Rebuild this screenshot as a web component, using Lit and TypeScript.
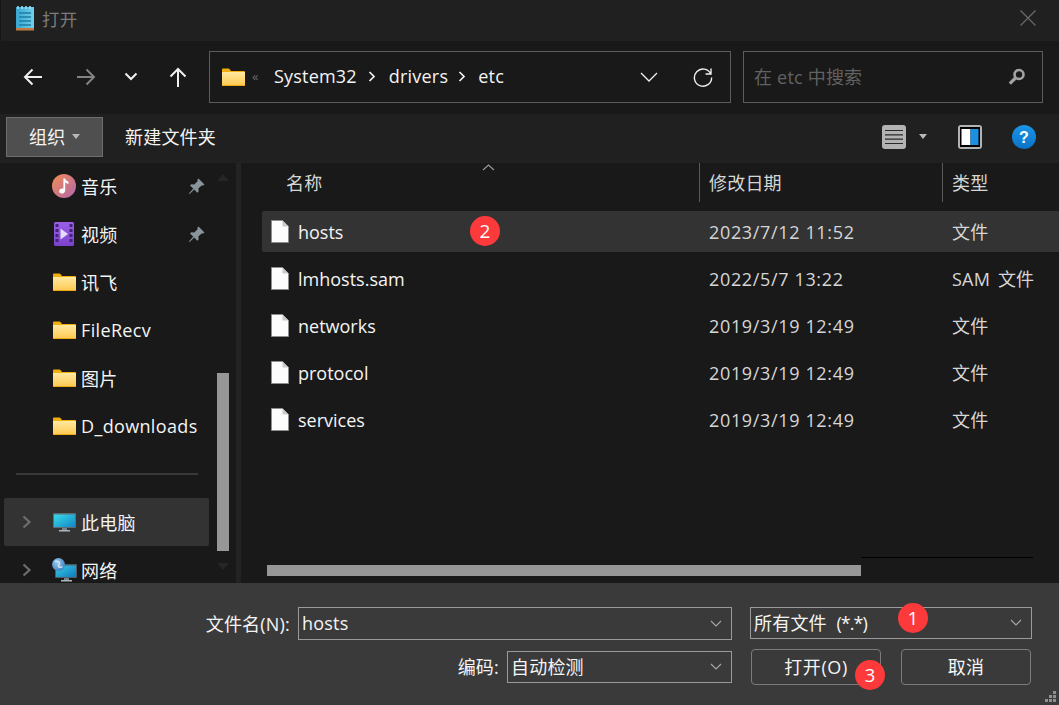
import { LitElement, html, css, svg } from "lit";
import { customElement } from "lit/decorators.js";

const folder = (id: string) => html`<svg class="ic-folder" width="23" height="18" viewBox="0 0 23 18">
  <defs><linearGradient id=${id} x1="0" y1="0" x2="0" y2="1"><stop offset="0" stop-color="#ffe9a0"/><stop offset="1" stop-color="#ffc84f"/></linearGradient></defs>
  <path d="M0 1.5A1 1 0 0 1 1 .5h6l2 2.5h13a1 1 0 0 1 1 1v1H0z" fill="#f3ad0c"/>
  <path d="M0 4h23v13a1 1 0 0 1-1 1H1a1 1 0 0 1-1-1z" fill="url(#${id})"/>
  <path d="M0 17h23v.2a.8.8 0 0 1-.8.8H.8a.8.8 0 0 1-.8-.8z" fill="#eba914"/>
</svg>`;

const pin = html`<svg width="17" height="17" viewBox="0 0 17 17"><path d="M10.5.5 16.5 6.5 15 7.6 13.6 7.4 10.4 10.6 10.6 13.4 9.2 14.8 6.3 11.4 1.6 16 .9 15.4 5.3 10.4 2 7.6 3.4 6.2 6.2 6.4 9.6 3.2 9.4 1.8z" fill="#8a949b"/></svg>`;

const music = html`<svg width="24" height="24" viewBox="0 0 24 24">
  <defs><linearGradient id="mu" x1="0" y1="0" x2="1" y2="1"><stop offset="0" stop-color="#f18c52"/><stop offset="1" stop-color="#b268ac"/></linearGradient></defs>
  <circle cx="12" cy="12" r="12" fill="url(#mu)"/>
  <path d="M11.4 4.5h1.8c.3 2 1.8 2.4 3.3 3.2v2.2c-1.4-.4-2.4-.9-3.3-1.7v8c0 2-1.6 3.4-3.4 3.4-1.5 0-2.6-1-2.6-2.3 0-1.6 1.5-2.7 3.1-2.7.4 0 .8 0 1.1.2z" fill="#fff"/>
</svg>`;

const video = html`<svg width="20" height="24" viewBox="0 0 20 24">
  <defs><linearGradient id="vi" x1="0" y1="0" x2="0" y2="1"><stop offset="0" stop-color="#9a5fe6"/><stop offset="1" stop-color="#7c42cc"/></linearGradient></defs>
  <rect width="20" height="24" rx="1.5" fill="url(#vi)"/>
  ${[2, 7, 12, 17].map((y) => svg`<rect x="1.5" y=${y} width="3" height="3" fill="#3f2477"/><rect x="15.5" y=${y} width="3" height="3" fill="#3f2477"/>`)}
  <path d="M6.5 6.5 14 12l-7.500 5.500z" fill="#e4dcfa"/>
</svg>`;

const pc = html`<svg width="23" height="19" viewBox="0 0 23 19">
  <defs><linearGradient id="pc" x1="0" y1="0" x2="1" y2="1"><stop offset="0" stop-color="#38dcea"/><stop offset="1" stop-color="#1585c4"/></linearGradient></defs>
  <rect x="0" y="0" width="23" height="15" rx="1" fill="#5d6b74"/>
  <rect x="1" y="1.500" width="21" height="12.500" fill="url(#pc)"/>
  <rect x="9" y="15" width="5" height="2" fill="#74828a"/><rect x="6" y="17" width="11" height="1.500" fill="#aeb6bb"/>
</svg>`;

const net = html`<svg width="25" height="24" viewBox="0 0 25 24">
  <defs>
    <linearGradient id="ne" x1="0" y1="0" x2="1" y2="1"><stop offset="0" stop-color="#38cde6"/><stop offset="1" stop-color="#1078bd"/></linearGradient>
    <radialGradient id="gl" cx=".4" cy=".35" r=".8"><stop offset="0" stop-color="#9ccdf0"/><stop offset="1" stop-color="#2b74b5"/></radialGradient>
  </defs>
  <rect x="3" y="6" width="22" height="14" rx="1" fill="#4e5c65"/>
  <rect x="4" y="7.500" width="20" height="11.500" fill="url(#ne)"/>
  <rect x="12" y="20" width="5" height="2" fill="#74828a"/><rect x="9" y="22" width="11" height="1.500" fill="#aeb6bb"/>
  <circle cx="6.500" cy="6.500" r="6.500" fill="url(#gl)"/>
  <path d="M3 3.500c2-1 4 0 4.500 1.500s-1.500 2-1 3.500 3 .5 4 .5" fill="none" stroke="#d6e8f6" stroke-width="1.400"/>
</svg>`;

const file = html`<svg width="18" height="23" viewBox="0 0 18 23"><path d="M.5.5h11l6 6v16H.5z" fill="#fcfcfc" stroke="#8d8d8d"/><path d="M11.500.5v6h6z" fill="#c9c9c9"/></svg>`;

const chev = html`<svg width="12" height="8" viewBox="0 0 12 8"><path d="M1 1l5 5 5-5" fill="none" stroke="#a8a8a8" stroke-width="1.100"/></svg>`;
const sideChev = html`<svg width="10" height="14" viewBox="0 0 10 14"><path d="M1.500 1.500 7.500 7l-6 5.500" fill="none" stroke="#6e6e6e" stroke-width="2.200"/></svg>`;
const crumb = html`<svg width="8" height="11" viewBox="0 0 8 11"><path d="M1.500 1 6 5.500 1.500 10" fill="none" stroke="#f2f2f2" stroke-width="1.700"/></svg>`;

@customElement("app-root")
export class AppRoot extends LitElement {
  static styles = css`
    :host { display: block; width: 1059px; height: 705px; overflow: hidden; position: relative;
      font-family: "Open Sans", "Noto Sans CJK SC", sans-serif; font-size: 18px; letter-spacing: .2px; color: #f4f4f4; background: #191919; }
    svg { display: block; flex: none; }
    .title { height: 41px; background: #202020; display: flex; align-items: center; padding: 0 23px 5px 14px; color: #7a7a7a; box-sizing: border-box; border-left: 1px solid #141414; }
    .title .name { margin-left: 7px; font-size: 17.500px; flex: 1; }
    .nav { height: 73px; box-sizing: border-box; background: #191919; display: flex; align-items: center; padding: 0 0 2px 10px; }
    .navbtn { display: flex; justify-content: center; align-items: center; }
    .b1 { width: 46px; } .b2 { width: 60px; } .b3 { width: 30px; } .b4 { width: 63px; }
    .addr { width: 522px; height: 52px; box-sizing: border-box; border: 1px solid #5c5c5c; display: flex; align-items: center; padding-left: 12px; }
    .laquo { color: #6a6a6a; font-size: 13px; margin: 0 13px 0 7px; width: 9px; line-height: 1; }
    .cr { margin: 0 13px 0 11px; }
    .cr.second { margin: 0 12px 0 10px; }
    .sp { flex: 1; }
    .txt { display: block; margin-top: -2px; }
    .refresh { margin: 0 17px 0 35px; }
    .search { width: 300px; height: 52px; margin-left: 12px; box-sizing: border-box; border: 1px solid #5c5c5c; display: flex; align-items: center; padding: 0 17px 0 10px; color: #626262; justify-content: space-between; }
    .tools { height: 47px; box-sizing: border-box; background: #202020; display: flex; align-items: center; padding: 0 23px 2px 6px; }
    .org { width: 97px; height: 40px; box-sizing: border-box; background: #4f4f4f; border: 1px solid #6e6e6e; display: flex; align-items: center; padding-left: 22px; gap: 7px; }
    .caret { width: 0; height: 0; border-left: 4.500px solid transparent; border-right: 4.500px solid transparent; border-top: 5px solid #b8b8b8; }
    .newf { margin-left: 22px; flex: 1; }
    .tr { display: flex; align-items: center; }
    .tcaret { margin: 0 31px 0 13px; }
    .help { margin-left: 30px; }
    .main { height: 422px; display: flex; background: #191919; border-top: 2px solid #212121; box-sizing: border-box; }
    .side { width: 210px; overflow: hidden; padding-left: 4px; box-sizing: border-box; flex: none; margin-top: -1px; }
    .item { height: 48px; width: 205px; display: grid; grid-template-columns: 48px 29px 1fr 17px; align-items: center; box-sizing: border-box; padding-right: 4px; justify-items: start; flex: none; }
    .item .i { display: flex; justify-content: center; width: 24px; }
    .item .c { padding-left: 18px; }
    .item.sel { background: #333; border-radius: 2px; }
    .item .t { white-space: nowrap; margin-top: -1px; }
    .item .long { letter-spacing: .35px; }
    .div { height: 48px; display: flex; align-items: center; padding-left: 12px; }
    .div i { display: block; width: 182px; height: 2px; background: #393939; }
    .sb { width: 26px; display: flex; flex-direction: column; align-items: center; flex: none; }
    .up { margin-top: 11px; width: 0; height: 0; border-left: 6px solid transparent; border-right: 6px solid transparent; border-bottom: 7px solid #262626; }
    .thumb { margin-top: 192px; width: 12px; height: 178px; background: #979797; }
    .dn { margin-top: 12px; width: 0; height: 0; border-left: 6px solid transparent; border-right: 6px solid transparent; border-top: 7px solid #262626; }
    .split { width: 5px; background: #232323; flex: none; }
    .list { flex: 1; display: flex; flex-direction: column; padding-left: 21px; position: relative; min-width: 0; }
    .head { height: 46px; flex: none; display: grid; grid-template-columns: 437px 243px 1fr; color: #d6d6d6; margin-bottom: 2px; }
    .hc { height: 39px; box-sizing: border-box; display: flex; align-items: center; padding: 0 0 1px 9px; border-left: 1px solid #5a5a5a; position: relative; }
    .hc.first { border-left: 0; padding-left: 24px; }
    .sort { position: absolute; left: 220px; top: 1px; }
    .rows { flex: 1; margin-top: -1px; }
    .row { height: 47px; display: grid; grid-template-columns: 437px 243px 1fr; align-items: center; color: #d6d6d6; }
    .row.sel { height: 41px; margin: 1px 0 3px; background: #333; border-radius: 2px 0 0 2px; }
    .nm { display: flex; align-items: center; gap: 9px; padding-left: 9px; color: #f4f4f4; letter-spacing: 0; }
    .dt, .ty { padding-left: 10px; }
    .dt { letter-spacing: .65px; }
    .ty { margin-top: -2px; word-spacing: 3px; }
    .hs { flex: none; height: 26px; margin-left: 5px; display: flex; align-items: flex-start; }
    .hs .bar { width: 594px; height: 11px; background: #979797; margin-top: 8px; }
    .hs .ln { width: 172px; height: 1px; background: #000; }
    .bottom { height: 122px; background: #3a3a3a; padding: 24px 27px 0 0; box-sizing: border-box; display: flex; flex-direction: column; gap: 9px; position: relative; }
    .r { display: flex; align-items: center; justify-content: flex-end; }
    .lbl { margin: -2px 8px 0 0; }
    .fld { box-sizing: border-box; border: 1px solid #9a9a9a; display: flex; align-items: center; justify-content: space-between; padding: 0 9px 0 3px; }
    .f1 { width: 434px; height: 33px; }
    .f2 { width: 282px; height: 32px; margin-left: 18px; align-self: flex-start; }
    .f3 { width: 225px; height: 32px; }
    .pat { letter-spacing: -1px; }
    .btn { box-sizing: border-box; width: 130px; height: 36px; padding-bottom: 2px; border: 1px solid #7c7c7c; border-radius: 4px; display: flex; align-items: center; justify-content: center; }
    .btn.o { margin-left: 19px; letter-spacing: .6px; }
    .btn.x { margin-left: 20px; margin-right: 1px; }
    .badge { position: absolute; width: 30px; height: 30px; border-radius: 50%; background: #fd3a3b; color: #fff; display: flex; align-items: center; justify-content: center; font-size: 19px; }
    .b-1 { left: 898px; top: 603px; } .b-2 { left: 470px; top: 216px; } .b-3 { left: 855px; top: 660px; }
    .grip { position: absolute; right: 2px; bottom: 2px; }
  `;

  render() {
    const rows = [
      ["lmhosts.sam", "2022/5/7 13:22", "SAM 文件"],
      ["networks", "2019/3/19 12:49", "文件"],
      ["protocol", "2019/3/19 12:49", "文件"],
      ["services", "2019/3/19 12:49", "文件"],
    ];
    const sideItems = [
      [music, "音乐", true], [video, "视频", true], [folder("f1"), "讯飞", false],
      [folder("f2"), "FileRecv", false], [folder("f3"), "图片", false], [folder("f4"), "D_downloads", false],
    ] as const;
    return html`
      <div class="title">
        <svg width="20" height="25" viewBox="0 0 20 25">
          <defs><linearGradient id="np" x1="0" y1="0" x2="1" y2="0"><stop offset="0" stop-color="#3aa6cf"/><stop offset="1" stop-color="#6fd0ee"/></linearGradient></defs>
          <rect x="1" y="1" width="18" height="23" fill="url(#np)"/>
          <rect x="1" y="22" width="18" height="2.500" fill="#c27a3e"/>
          <path d="M4 7h12M4 11h12M4 15h12M4 19h12" stroke="#1f7ea3" stroke-width="1.500"/>
          <path d="M3 0v3M7 0v3M11 0v3M15 0v3" stroke="#9fe0f5" stroke-width="1.500"/>
        </svg>
        <span class="name">打开</span>
        <svg width="16" height="16" viewBox="0 0 16 16"><path d="M.5.5l15 15M15.500.5l-15 15" stroke="#6a6a6a" stroke-width="1.200"/></svg>
      </div>
      <div class="nav">
        <div class="navbtn b1"><svg width="20" height="18" viewBox="0 0 20 18"><path d="M19 9H2M9.500 1.500 2 9l7.500 7.500" fill="none" stroke="#efefef" stroke-width="2"/></svg></div>
        <div class="navbtn b2"><svg width="20" height="18" viewBox="0 0 20 18"><path d="M1 9h17M10.500 1.500 18 9l-7.500 7.500" fill="none" stroke="#838383" stroke-width="2"/></svg></div>
        <div class="navbtn b3"><svg width="14" height="9" viewBox="0 0 14 9"><path d="M1.500 1.500 7 7l5.500-5.500" fill="none" stroke="#efefef" stroke-width="2"/></svg></div>
        <div class="navbtn b4"><svg width="18" height="20" viewBox="0 0 18 20"><path d="M9 20V2M1.500 9.500 9 2l7.500 7.500" fill="none" stroke="#efefef" stroke-width="2"/></svg></div>
        <div class="addr">
          ${folder("fa")}
          <span class="laquo">«</span>
          <span class="txt">System32</span><span class="cr">${crumb}</span><span class="txt">drivers</span><span class="cr second">${crumb}</span><span class="txt">etc</span>
          <span class="sp"></span>
          <svg width="18" height="10" viewBox="0 0 18 10"><path d="M1 1l8 8 8-8" fill="none" stroke="#efefef" stroke-width="1.300"/></svg>
          <svg class="refresh" width="20" height="20" viewBox="0 0 20 20"><path d="M17.800 7A8.600 8.600 0 1 0 18.600 10.500M18 1.500V7h-5.500" fill="none" stroke="#efefef" stroke-width="1.400"/></svg>
        </div>
        <div class="search">
          <span class="txt">在 etc 中搜索</span>
          <svg width="17" height="18" viewBox="0 0 17 18"><circle cx="11" cy="6.500" r="4.500" fill="none" stroke="#a2a2a2" stroke-width="2.600"/><path d="M7.500 10 1.800 15.700" stroke="#a2a2a2" stroke-width="3.200"/></svg>
        </div>
      </div>
      <div class="tools">
        <div class="org"><span class="txt">组织</span><span class="caret"></span></div>
        <div class="newf"><span class="txt">新建文件夹</span></div>
        <div class="tr">
          <svg width="24" height="24" viewBox="0 0 24 24"><rect width="24" height="24" rx="3" fill="#b3b3b3"/><path d="M3 5.500h18M3 9.800h18M3 14.200h18M3 18.500h18" stroke="#2a2a2a" stroke-width="1.200"/></svg>
          <span class="caret tcaret"></span>
          <svg width="24" height="24" viewBox="0 0 24 24"><rect width="24" height="24" rx="3" fill="#b3b3b3"/><rect x="2" y="2" width="20" height="20" fill="#000"/><rect x="3.500" y="4" width="9" height="16" fill="#fff"/><rect x="12.500" y="4" width="8" height="16" fill="#1c8fe0"/></svg>
          <svg class="help" width="24" height="24" viewBox="0 0 24 24"><defs><linearGradient id="hp" x1="0" y1="0" x2="0" y2="1"><stop offset="0" stop-color="#1b95e8"/><stop offset="1" stop-color="#0a72c6"/></linearGradient></defs><circle cx="12" cy="12" r="12" fill="url(#hp)"/><text x="12" y="17.500" text-anchor="middle" font-size="16" font-weight="700" fill="#fff" font-family="Liberation Sans, sans-serif">?</text></svg>
        </div>
      </div>
      <div class="main">
        <div class="side">
          ${sideItems.map(([ic, t, p]) => html`<div class="item"><span></span><span class="i">${ic}</span><span class="t ${t.length > 2 ? "long" : ""}">${t}</span>${p ? pin : html`<span></span>`}</div>`)}
          <div class="div"><i></i></div>
          <div class="item sel"><span class="c">${sideChev}</span><span class="i">${pc}</span><span class="t">此电脑</span><span></span></div>
          <div class="item"><span class="c">${sideChev}</span><span class="i">${net}</span><span class="t">网络</span><span></span></div>
        </div>
        <div class="sb"><i class="up"></i><i class="thumb"></i><i class="dn"></i></div>
        <div class="split"></div>
        <div class="list">
          <div class="head">
            <div class="hc first">名称<svg class="sort" width="13" height="7" viewBox="0 0 13 7"><path d="M1 6l5.500-5L12 6" fill="none" stroke="#9a9a9a" stroke-width="1.100"/></svg></div>
            <div class="hc">修改日期</div>
            <div class="hc">类型</div>
          </div>
          <div class="rows">
            <div class="row sel"><div class="nm">${file}<span>hosts</span></div><div class="dt">2023/7/12 11:52</div><div class="ty">文件</div></div>
            ${rows.map((r) => html`<div class="row"><div class="nm">${file}<span>${r[0]}</span></div><div class="dt">${r[1]}</div><div class="ty">${r[2]}</div></div>`)}
          </div>
          <div class="hs"><div class="bar"></div><div class="ln"></div></div>
        </div>
      </div>
      <div class="bottom">
        <div class="r">
          <span class="lbl">文件名(N):</span>
          <div class="fld f1"><span class="txt">hosts</span>${chev}</div>
          <div class="fld f2"><span class="txt">所有文件 &nbsp;<span class="pat">(*.*)</span></span>${chev}</div>
        </div>
        <div class="r">
          <span class="lbl">编码:</span>
          <div class="fld f3"><span class="txt">自动检测</span>${chev}</div>
          <div class="btn o">打开(O)</div>
          <div class="btn x">取消</div>
        </div>
        <svg class="grip" width="12" height="12" viewBox="0 0 12 12" fill="#8f8f8f"><rect x="8" y="0" width="3" height="3"/><rect x="4" y="4" width="3" height="3"/><rect x="8" y="4" width="3" height="3"/><rect x="0" y="8" width="3" height="3"/><rect x="4" y="8" width="3" height="3"/><rect x="8" y="8" width="3" height="3"/></svg>
      </div>
      <div class="badge b-1">1</div>
      <div class="badge b-2">2</div>
      <div class="badge b-3">3</div>
    `;
  }
}
